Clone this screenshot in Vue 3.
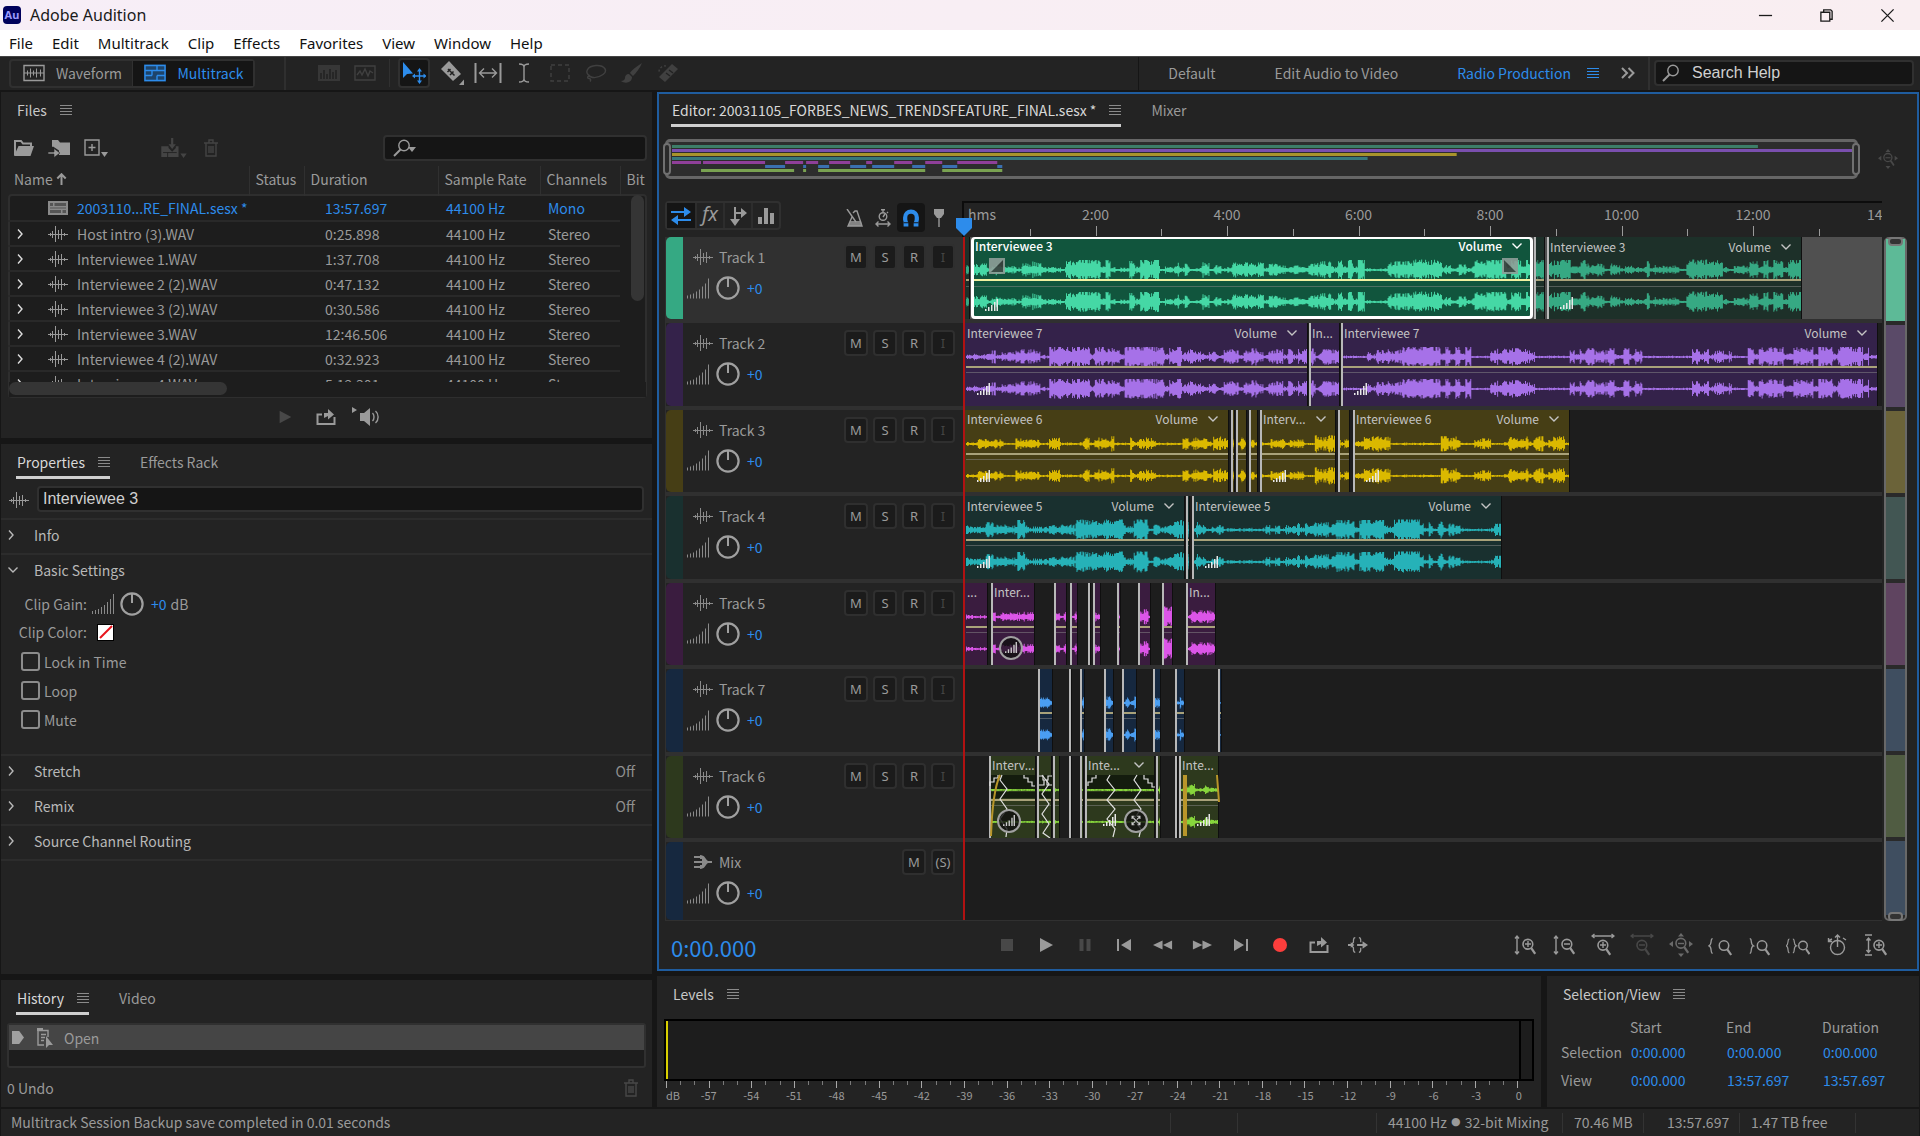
<script setup>
import { ref } from 'vue'

const menus = ['File', 'Edit', 'Multitrack', 'Clip', 'Effects', 'Favorites', 'View', 'Window', 'Help']

const files = [
  { name: '2003110...RE_FINAL.sesx *', duration: '13:57.697', channels: 'Mono', session: true },
  { name: 'Host intro (3).WAV', duration: '0:25.898', channels: 'Stereo' },
  { name: 'Interviewee 1.WAV', duration: '1:37.708', channels: 'Stereo' },
  { name: 'Interviewee 2 (2).WAV', duration: '0:47.132', channels: 'Stereo' },
  { name: 'Interviewee 3 (2).WAV', duration: '0:30.586', channels: 'Stereo' },
  { name: 'Interviewee 3.WAV', duration: '12:46.506', channels: 'Stereo' },
  { name: 'Interviewee 4 (2).WAV', duration: '0:32.923', channels: 'Stereo' },
  { name: 'Interviewee 4.WAV', duration: '5:12.301', channels: 'Stereo' }
]

// Timeline units: the visible session is LANE units wide.
const LANE = 918
const pct = (v) => (v / LANE) * 100 + '%'

// env: [end of segment, loudness 0-9]; clips: [start, end, options]
const tracks = [
  {
    name: 'Track 1', key: 't1', selected: true,
    env: [[36, 6], [52, 4], [77, 8], [99, 4], [125, 9], [145, 9], [164, 3], [194, 9], [213, 4], [225, 8], [237, 3], [257, 7], [268, 3], [295, 8], [316, 7], [345, 4], [373, 8], [402, 9], [425, 2], [451, 8], [480, 9.5], [513, 5], [525, 9], [569, 9], [620, 9], [667, 6], [682, 3], [691, 8], [722, 4], [759, 9.5], [786, 4], [838, 9]],
    clips: [
      [0, 6, {}],
      [7, 569, { label: 'Interviewee 3', vol: true, chev: true, on: true, bars: true }],
      [570, 581, {}],
      [583, 838, { label: 'Interviewee 3', vol: true, chev: true, bars: true }]
    ]
  },
  {
    name: 'Track 2', key: 't2',
    env: [[25, 3], [50, 6], [75, 7], [84, 2], [217, 9], [229, 7], [258, 6], [300, 8], [343, 8], [376, 8], [401, 1], [437, 7], [506, 9], [525, 1], [570, 8], [605, 1], [655, 8], [659, 3], [678, 8], [728, 1], [768, 7], [784, 1], [906, 9], [911, 2], [918, 6]],
    clips: [
      [0, 344, { label: 'Interviewee 7', vol: true, chev: true, bars: true }],
      [345, 376, { label: 'In...' }],
      [377, 914, { label: 'Interviewee 7', vol: true, chev: true, bars: true }]
    ]
  },
  {
    name: 'Track 3', key: 't3',
    env: [[12, 2], [38, 5], [50, 1], [75, 5], [84, 1], [96, 7], [118, 2], [150, 7], [166, 1], [192, 6], [219, 1], [265, 7], [290, 6], [300, 2], [340, 5], [351, 1], [372, 8], [386, 6], [398, 3], [425, 7], [476, 1], [496, 7], [510, 1], [527, 6], [540, 1], [602, 7], [606, 1]],
    clips: [
      [0, 265, { label: 'Interviewee 6', vol: true, chev: true, bars: true }],
      [267, 271, {}], [272, 283, {}], [285, 294, {}],
      [296, 372, { label: 'Interv...', chev: true, bars: true }],
      [374, 386, {}],
      [389, 606, { label: 'Interviewee 6', vol: true, chev: true, bars: true }]
    ]
  },
  {
    name: 'Track 4', key: 't4',
    env: [[13, 4], [42, 7], [52, 4], [60, 9], [85, 4], [111, 6], [160, 9.5], [170, 4], [184, 9.5], [210, 5], [219, 9], [234, 8], [258, 5], [300, 2], [332, 5], [342, 8], [370, 7], [420, 9], [430, 5], [456, 9.5], [468, 7], [474, 4], [482, 8], [497, 6], [531, 2], [538, 6]],
    clips: [
      [0, 221, { label: 'Interviewee 5', vol: true, chev: true, bars: true }],
      [222, 226, {}],
      [228, 538, { label: 'Interviewee 5', vol: true, chev: true, bars: true }]
    ]
  },
  {
    name: 'Track 5', key: 't5',
    env: [[27, 2], [60, 4], [71, 6], [120, 5], [170, 4], [190, 7], [210, 9.5], [258, 8]],
    clips: [
      [0, 24, { label: '...' }], [27, 71, { label: 'Inter...', round: 'bars' }], [90, 103, {}], [106, 114, {}],
      [124, 127, {}], [129, 137, {}], [153, 157, {}], [174, 187, {}], [198, 209, {}], [222, 252, { label: 'In...' }]
    ]
  },
  {
    name: 'Track 7', key: 't7',
    env: [[104, 5], [110, 0], [250, 6], [260, 0]],
    clips: [
      [74, 89, {}], [105, 108, {}], [116, 121, {}], [140, 150, {}], [158, 173, {}], [189, 197, {}], [211, 221, {}], [254, 258, {}]
    ]
  },
  {
    name: 'Track 6', key: 't6', fades: true,
    env: [[89, 1], [96, 2], [191, 1], [197, 5], [218, 4], [255, 6]],
    clips: [
      [25, 72, { label: 'Interv...', round: 'bars' }], [73, 88, {}], [89, 96, {}], [105, 108, {}], [116, 120, {}],
      [121, 191, { label: 'Inte...', chev: true, bars: true, round: 'mix' }], [192, 197, {}], [211, 214, {}],
      [215, 255, { label: 'Inte...', bars: true }]
    ]
  }
]

const rand = (n) => {
  const s = Math.sin(n * 127.1 + 11.7) * 43758.5453
  return s - Math.floor(s)
}

function level(track, x) {
  const seg = track.env.find((s) => x < s[0])
  const loud = seg ? seg[1] : 0
  const seed = track.env.length
  if (loud <= 2) return 0.7 + loud * rand(x + seed) * rand(x * 7 + seed)
  const pause = rand(Math.floor(x / 5) + seed * 3) < 0.18 && loud < 9.5 ? 0.35 : 1
  const syllable = 0.6 + 0.5 * rand(Math.floor(x / 7) + seed)
  const spike = 0.4 + 0.75 * rand(x * 3 + seed)
  return Math.max(1, loud * 1.1 * pause * Math.min(1, syllable * spike + (loud > 8 ? 0.2 : 0)))
}

function wave(track, start, end, mid) {
  let top = `M0 ${mid}`
  let bottom = ''
  for (let x = 0; x < end - start; x += 1) {
    const a = level(track, start + x)
    const b = a * (0.8 + 0.2 * rand(x + start))
    top += `V${(mid - a).toFixed(1)}H${x + 1}`
    bottom = `V${(mid + b).toFixed(1)}H${x}` + bottom
  }
  return top + bottom + 'Z'
}

const ruler = []
for (let m = 1; m <= 14; m += 1) {
  ruler.push({ at: (m * 60 * LANE) / 837.7, label: m % 2 ? '' : m + ':00' })
}

const overview = [
  ['#3d7d68', 0, [[0, 1085]]],
  ['#7a4fae', 4, [[0, 1181]]],
  ['#a8932c', 8, [[0, 784]]],
  ['#36777b', 12, [[0, 695]]],
  ['#8f3f99', 16, [[0, 29], [31, 93], [113, 131], [134, 146], [157, 178], [194, 200], [222, 240], [253, 270], [285, 325]]],
  ['#3a70b0', 20, [[93, 113], [131, 134], [146, 157], [178, 194], [200, 222], [240, 253], [270, 285], [325, 330]]],
  ['#79a251', 24, [[29, 122], [131, 134], [146, 253], [270, 330]]]
]

const transport = [
  ['stop', 'Stop', true], ['play', 'Play'], ['pause', 'Pause', true], ['prev', 'Move to previous'], ['rewind', 'Rewind'],
  ['forward', 'Fast forward'], ['next', 'Move to next'], ['record', 'Record'], ['loop', 'Loop playback'], ['skip', 'Skip selection']
]
const zooms = [
  ['z-in-v', 'Zoom in amplitude'], ['z-out-v', 'Zoom out amplitude'], ['z-in-h', 'Zoom in time'], ['z-out-h', 'Zoom out time', true],
  ['z-full', 'Zoom out full', false, true], ['z-left', 'Zoom in at in point'], ['z-right', 'Zoom in at out point'], ['z-sel', 'Zoom to selection'],
  ['timer', 'Zoom to time'], ['z-track', 'Zoom selected track']
]

const dbTicks = Array.from({ length: 61 }, (_, i) => i)
const dbLabels = Array.from({ length: 21 }, (_, i) => (i ? String(i * 3 - 60) : 'dB'))

const clipName = ref('Interviewee 3')
const flags = ref([
  { label: 'Lock in Time', id: 'lock', on: false },
  { label: 'Loop', id: 'loop', on: false },
  { label: 'Mute', id: 'mute', on: false }
])
</script>

<template>
  <div class="app">
    <svg class="sprite" aria-hidden="true">
      <symbol id="i-menu" viewBox="0 0 12 12"><path d="M0 1.5h12M0 4.5h12M0 7.5h12M0 10.5h12" class="ln" /></symbol>
      <symbol id="i-right" viewBox="0 0 8 12"><path d="M2 1.5l4 4.5-4 4.5" class="ln2" /></symbol>
      <symbol id="i-down" viewBox="0 0 12 8"><path d="M1.500 1.500l4.500 4.500 4.500-4.500" class="ln2" /></symbol>
      <symbol id="i-wave" viewBox="0 0 20 16"><path d="M0 8.500h20M2.500 7v3M4.500 5v7M7.500 0v16M10.500 4v9M13.500 3v11M16.500 7v3" class="ln" /></symbol>
      <symbol id="i-wavebox" viewBox="0 0 22 17"><path d="M1 1h20v15H1z" class="ln2" /><path d="M1 8.500h20M4.500 6v5M7.500 4v9M10.500 6v5M13.500 4v9M17.500 5v7" class="ln" /></symbol>
      <symbol id="i-multi" viewBox="0 0 22 17"><path d="M0 0h22v17H0z" fill="currentColor" opacity=".4" /><path d="M1 1h20v15H1zM1 6h20M13 11h8M8 6v5M8 11H1M13 1v5M13 11v5" class="ln2" /></symbol>
      <symbol id="i-session" viewBox="0 0 20 14"><path d="M0 0h20v14H0z" fill="currentColor" /><path d="M2 2h3v3H2zM6.500 2h11.500v3H6.500zM2 6.500h16v1H2zM2 9h11v3H2zM14.500 9h3.500v3h-3.500z" fill="#555" /></symbol>
      <symbol id="i-spec" viewBox="0 0 22 16"><path d="M0 0h22v16H0z" fill="currentColor" opacity=".7" /><path d="M3 14V8M6 14V5M9 14V9M12 14V4M15 14V7M18 14V5" stroke="#222" stroke-width="1.500" /></symbol>
      <symbol id="i-pitch" viewBox="0 0 22 16"><path d="M1 1h20v14H1zM3 10l3-4 2 4 3-6 3 7 2-5 3 2" class="ln2" /></symbol>
      <symbol id="i-move" viewBox="0 0 24 24"><path d="M1 1v16l4-4 6-.5z" fill="currentColor" /><path d="M12 15h11M17.500 9.500v11" class="ln2" /><path d="M17.500 7l-2.500 3.500h5zM17.500 23l-2.500-3.500h5zM10 15l3-2.500v5zM24.500 15l-3-2.500v5z" fill="currentColor" /></symbol>
      <symbol id="i-razor" viewBox="0 0 24 24"><path d="M9 0l12 13-8 7L1 8z" fill="currentColor" /><path d="M8 8l6.500 6.500M7.500 11l3-3M10 14l3.500-3.500" stroke="#222" stroke-width="1.500" /><path d="M24 18.500V24h-5z" fill="currentColor" /></symbol>
      <symbol id="i-slip" viewBox="0 0 28 20"><path d="M1.500 0v20M26.500 0v20" class="ln3" /><path d="M6 10h16M10 5.500L5.500 10l4.500 4.500M18 5.500l4.500 4.500-4.500 4.500" class="ln2" /></symbol>
      <symbol id="i-ibeam" viewBox="0 0 12 20"><path d="M1 1c3 0 5 1 5 3v12c0 2-2 3-5 3M11 1C8 1 6 2 6 4M6 16c0 2 2 3 5 3" class="ln2" /></symbol>
      <symbol id="i-marquee" viewBox="0 0 20 18"><path d="M1 1h18v16H1z" class="ln2" stroke-dasharray="4 3" /></symbol>
      <symbol id="i-lasso" viewBox="0 0 22 18"><path d="M5 12C-1 9 2 2 11 1.500S23 7 18 10.500 8 14 5 12.500c-3-1-3 2-1 2s2 2 1 3" class="ln2" /></symbol>
      <symbol id="i-brush" viewBox="0 0 22 20"><path d="M21 0c-5 3-10 7-12 10l3 3c3-3 7-8 9-13zM8 11c-3 0-4 2-4 4s-2 3-4 3c4 3 11 2 11-4z" fill="currentColor" /></symbol>
      <symbol id="i-heal" viewBox="0 0 22 20"><path d="M15 1l6 5L8 19l-6-5z" fill="currentColor" /><path d="M9 3a6 6 0 0 0-7 6" class="ln2" stroke-dasharray="2 2" /><path d="M9 10l4 3M12 7l4 3" stroke="#222" stroke-width="1.500" /></symbol>
      <symbol id="i-more" viewBox="0 0 14 12"><path d="M1 1l5 5-5 5M7.500 1l5 5-5 5" class="ln3" /></symbol>
      <symbol id="i-search" viewBox="0 0 18 18"><circle cx="11" cy="6.500" r="5.200" class="ln2" /><path d="M7.500 10.500L1 17" class="ln3" /></symbol>
      <symbol id="i-open" viewBox="0 0 20 16"><path d="M1 15V1h6l2 2.500h8V6" class="ln3" /><path d="M4.500 6H20l-3.500 10H0z" fill="currentColor" /></symbol>
      <symbol id="i-import" viewBox="0 0 22 18"><path d="M4 8V1h6l2 2.500h10V16H11v-4.500L5 7.500z" fill="currentColor" /><path d="M0 13h6V9.500l6 4.500-6 4.500V15H0z" fill="currentColor" stroke="#222" stroke-width=".6" /></symbol>
      <symbol id="i-new" viewBox="0 0 24 18"><path d="M1 1h14v15H1zM8 5v7M4.500 8.500h7" class="ln2" /><path d="M17 13h7l-3.500 5z" fill="currentColor" /></symbol>
      <symbol id="i-insert" viewBox="0 0 28 22"><path d="M0 9h8v2l4 4 4-4V9h3v12H0z" fill="currentColor" /><path d="M2 16h15M7 16v5" stroke="#222" /><path d="M10.800 0h2.400v7H16l-4 5-4-5h2.800zM21 17h7l-3.500 5z" fill="currentColor" /></symbol>
      <symbol id="i-trash" viewBox="0 0 14 18"><path d="M0 4h14M5 3.500V1h4v2.500M2 4v13h10V4M5 7v7M7 7v7M9 7v7" class="ln2" /></symbol>
      <symbol id="i-up" viewBox="0 0 10 12"><path d="M5 12V1.500M.800 5.500L5 1.200l4.200 4.300" class="ln3" /></symbol>
      <symbol id="i-play" viewBox="0 0 20 20"><path d="M4 3l13 7-13 7z" fill="currentColor" /></symbol>
      <symbol id="i-stop" viewBox="0 0 20 20"><path d="M4 4h12v12H4z" fill="currentColor" /></symbol>
      <symbol id="i-pause" viewBox="0 0 20 20"><path d="M4.500 4h4v12h-4zM11.500 4h4v12h-4z" fill="currentColor" /></symbol>
      <symbol id="i-prev" viewBox="0 0 20 20"><path d="M3 4h2v12H3zM17 4v12l-10-6z" fill="currentColor" /></symbol>
      <symbol id="i-next" viewBox="0 0 20 20"><path d="M15 4h2v12h-2zM3 4v12l10-6z" fill="currentColor" /></symbol>
      <symbol id="i-rewind" viewBox="0 0 22 20"><path d="M10.500 5v10L0 10zM21 5v10l-10-5z" fill="currentColor" /></symbol>
      <symbol id="i-forward" viewBox="0 0 22 20"><path d="M1 5v10l10.500-5zM11.500 5v10L22 10z" fill="currentColor" /></symbol>
      <symbol id="i-record" viewBox="0 0 20 20"><circle cx="10" cy="10" r="7" fill="#fc3e3c" /></symbol>
      <symbol id="i-loop" viewBox="0 0 20 18"><path d="M6 6.500H1.500V16h17V9" class="ln3" /><path d="M8 10V5h4V1l6 5.500-6 5V8z" fill="currentColor" /></symbol>
      <symbol id="i-skip" viewBox="0 0 22 18"><path d="M8 1c-2 0-2 1-2 3v2L3.500 9 6 12v2c0 2 0 3 2 3M12 1c2 0 2 1 2 3v2M14 12v2c0 2 0 3-2 3" class="ln2" /><path d="M0 8h3V6l4 3-4 3v-2H0zM10 8h6V5l6 4-6 4v-3h-6z" fill="currentColor" /></symbol>
      <symbol id="i-speaker" viewBox="0 0 28 20"><path d="M0 0l5 3-5 3zM8 6h4l6-5v18l-6-5H8z" fill="currentColor" /><path d="M20.500 6c2 2 2 6 0 8M23.500 4c3.500 3 3.500 9 0 12" class="ln2" /></symbol>
      <symbol id="i-volbars" viewBox="0 0 22 20"><path d="M.5 20v-3M3.500 20v-4M6.500 20v-5M9.500 20v-7M12.500 20v-9M15.500 20V8M18.500 20V5M21.500 20V0" class="ln" /></symbol>
      <symbol id="i-knob" viewBox="0 0 24 24"><circle cx="12" cy="12" r="10.600" fill="none" stroke="currentColor" stroke-width="2.200" /><path d="M12 2v9" class="ln3" /></symbol>
      <symbol id="i-arrows" viewBox="0 0 20 18"><path d="M0 5h14M20 13H5" class="ln3" /><path d="M13 0l7 5-7 5zM7 8l-7 5 7 5z" fill="currentColor" /></symbol>
      <symbol id="i-send" viewBox="0 0 18 20"><path d="M6 1v14M6 7h8" class="ln3" /><path d="M1 13h10l-5 7zM12 2l6 5-6 5z" fill="currentColor" /></symbol>
      <symbol id="i-eq" viewBox="0 0 16 16"><path d="M0 9h4v7H0zM6 0h4v16H6zM12 5h4v11h-4z" fill="currentColor" /></symbol>
      <symbol id="i-metro" viewBox="0 0 16 18"><path d="M6 4l2-2h2l5 15H1l4-9M0 0l9 13" class="ln2" /><path d="M3 12h11l1 5H1z" fill="currentColor" opacity=".8" /></symbol>
      <symbol id="i-watch" viewBox="0 0 18 18"><circle cx="9" cy="7.500" r="3.800" class="ln2" /><path d="M9 3V.5M7 .8h4M9 8l2-3M13 3l1 1M2 15h14M4.500 12.500L2 15l2.500 2.500M13.500 12.500L16 15l-2.500 2.500" class="ln2" /></symbol>
      <symbol id="i-magnet" viewBox="0 0 16 17"><path d="M5.500 16.500H1V12a9 9 0 0 1-.5-4 7.500 7.500 0 0 1 15 0 9 9 0 0 1-.5 4v4.500h-4.500V13c1-2 1-3 1-5a3.500 3.500 0 0 0-7 0c0 2 0 3 1 5z" fill="currentColor" /><path d="M1 13h5M10 13h5" stroke="#161616" /></symbol>
      <symbol id="i-pin" viewBox="0 0 10 18"><path d="M0 0h10v5L7 9H3L0 5z" fill="currentColor" /><path d="M5 8v10" class="ln2" /></symbol>
      <symbol id="i-mix" viewBox="0 0 20 16"><path d="M1 3h6M1 13h6M1 8h18" class="ln3" /><path d="M7 1c5 0 5 4 8 6v2c-3 2-3 6-8 6v-4h2V5H7z" fill="currentColor" /></symbol>
      <symbol id="i-minibars" viewBox="0 0 13 12"><path d="M0 12V10h1.500v2zM3 12V8h1.500v4zM6 12V6h1.500v6zM9 12V3h1.500v9zM11.500 12V0H13v12z" fill="currentColor" /></symbol>
      <symbol id="i-shuffle" viewBox="0 0 14 14"><path d="M2 2l10 10M12 2L8 6M2 12l4-4M8.500 1.500H12V5M2 5V1.500h3M12 9v3.500H9M2 9v3.500h3" class="ln2" /></symbol>
      <symbol id="i-lens" viewBox="0 0 12 15"><circle cx="5" cy="5.500" r="4.300" class="ln2" /><path d="M8 9l3.500 5" class="ln3" /></symbol>
      <symbol id="i-z-in-v" viewBox="0 0 24 24"><use href="#i-lens" x="9" y="5" width="14" height="17" /><path d="M12 11h6M15 8v6M4 3v18M2 5.500L4 3l2 2.500M2 18.500L4 21l2-2.500" class="ln2" /></symbol>
      <symbol id="i-z-out-v" viewBox="0 0 24 24"><use href="#i-lens" x="9" y="5" width="14" height="17" /><path d="M12 11h6M4 3v18M2 5.500L4 3l2 2.500M2 18.500L4 21l2-2.500" class="ln2" /></symbol>
      <symbol id="i-z-in-h" viewBox="0 0 24 24"><use href="#i-lens" x="6" y="6" width="14" height="17" /><path d="M9 12h6M12 9v6M1 3h22M3.500 1L1 3l2.500 2M20.500 1L23 3l-2.500 2" class="ln2" /></symbol>
      <symbol id="i-z-out-h" viewBox="0 0 24 24"><use href="#i-lens" x="6" y="6" width="14" height="17" /><path d="M9 12h6M1 3h22M3.500 1L1 3l2.500 2M20.500 1L23 3l-2.500 2" class="ln2" /></symbol>
      <symbol id="i-z-full" viewBox="0 0 24 24"><use href="#i-lens" x="6" y="4" width="14" height="17" /><path d="M9 10.500h6" class="ln2" /><path d="M12 0l3 3.500H9zM12 24l3-3.500H9zM0 11l4-3v6zM24 11l-4-3v6z" fill="currentColor" /></symbol>
      <symbol id="i-z-left" viewBox="0 0 26 24"><use href="#i-lens" x="11" y="6" width="15" height="18" /><path d="M5 5c-3 0 0 6-4 8 4 1 1 8 4 8" class="ln2" /></symbol>
      <symbol id="i-z-right" viewBox="0 0 26 24"><use href="#i-lens" x="10" y="6" width="15" height="18" /><path d="M3 5c3 0 0 6 4 8-4 1-1 8-4 8" class="ln2" /></symbol>
      <symbol id="i-z-sel" viewBox="0 0 28 24"><use href="#i-lens" x="14" y="6" width="14" height="18" /><path d="M4 5c-3 0 0 6-4 8 4 1 1 8 4 8M8 5c3 0 0 6 4 8-4 1-1 8-4 8" class="ln2" /></symbol>
      <symbol id="i-timer" viewBox="0 0 24 24"><circle cx="12.500" cy="14.500" r="7" class="ln2" /><path d="M12.500 14V2M10 4.500L12.500 2 15 4.500M3 8l4-2M3.500 5v3.500H7M18 5l3 2" class="ln2" /></symbol>
      <symbol id="i-z-track" viewBox="0 0 24 24"><use href="#i-lens" x="9" y="6" width="14" height="17" /><path d="M12 12h6M15 9v6M1 2h7M1 22h7M4.500 5v14M2.500 7.500l2-2.500 2 2.500M2.500 17l2 2.500 2-2.500" class="ln2" /></symbol>
      <symbol id="i-doc" viewBox="0 0 18 20"><path d="M1 2.500h10V9M1 2.500V17h6M4 6.500h5M4 9.500h4M4 12.500h3" class="ln2" /><path d="M0 0h6v3H0zM9 8l7 9h-4l-3 3z" fill="currentColor" /></symbol>
    </svg>

    <header class="titlebar">
      <span class="logo">Au</span>
      <h1>Adobe Audition</h1>
      <div class="winbtns">
        <button aria-label="Minimize"><svg viewBox="0 0 16 16"><path d="M1 8h14" class="ln2" /></svg></button>
        <button aria-label="Restore"><svg viewBox="0 0 16 16"><path d="M2 4.500h9.500V14H2zM5 4V2h7.500L14 3.500V12h-2" class="ln2" /></svg></button>
        <button aria-label="Close"><svg viewBox="0 0 16 16"><path d="M1.500 1.500l13 13M14.500 1.500l-13 13" class="ln2" /></svg></button>
      </div>
    </header>
    <nav class="menubar">
      <button v-for="m in menus" :key="m">{{ m }}</button>
    </nav>

    <div class="toolbar">
      <div class="modes">
        <button class="mode"><svg class="w22"><use href="#i-wavebox" /></svg>Waveform</button>
        <button class="mode active"><svg class="w22"><use href="#i-multi" /></svg>Multitrack</button>
      </div>
      <div class="tools">
        <button class="tool dim" aria-label="Spectral frequency"><svg class="w22"><use href="#i-spec" /></svg></button>
        <button class="tool dim" aria-label="Spectral pitch"><svg class="w22"><use href="#i-pitch" /></svg></button>
        <i class="rule"></i>
        <button class="tool active" aria-label="Move tool"><svg class="w24"><use href="#i-move" /></svg></button>
        <button class="tool" aria-label="Razor tool"><svg class="w24"><use href="#i-razor" /></svg></button>
        <button class="tool" aria-label="Slip tool"><svg class="w28"><use href="#i-slip" /></svg></button>
        <button class="tool" aria-label="Time selection tool"><svg class="w20"><use href="#i-ibeam" /></svg></button>
        <button class="tool dim" aria-label="Marquee tool"><svg class="w20"><use href="#i-marquee" /></svg></button>
        <button class="tool dim" aria-label="Lasso tool"><svg class="w22"><use href="#i-lasso" /></svg></button>
        <button class="tool dim" aria-label="Paintbrush tool"><svg class="w22"><use href="#i-brush" /></svg></button>
        <button class="tool dim" aria-label="Healing brush tool"><svg class="w22"><use href="#i-heal" /></svg></button>
      </div>
      <div class="spaces">
        <button>Default</button>
        <button>Edit Audio to Video</button>
        <button class="active">Radio Production<svg class="burger"><use href="#i-menu" /></svg></button>
        <button class="more" aria-label="More workspaces"><svg><use href="#i-more" /></svg></button>
      </div>
      <div class="help">
        <label class="field"><svg class="w18"><use href="#i-search" /></svg><input type="text" value="Search Help" aria-label="Search Help" /></label>
      </div>
    </div>

    <main class="workspace">
      <div class="col">
        <section class="panel files">
          <div class="tabs"><button class="tab lit">Files<svg class="burger"><use href="#i-menu" /></svg></button></div>
          <div class="filetools">
            <button aria-label="Open file"><svg class="w20"><use href="#i-open" /></svg></button>
            <button aria-label="Import file"><svg class="w22"><use href="#i-import" /></svg></button>
            <button aria-label="New"><svg class="w24"><use href="#i-new" /></svg></button>
            <button class="dim" aria-label="Insert into multitrack"><svg class="w28"><use href="#i-insert" /></svg></button>
            <button class="dim" aria-label="Delete"><svg class="w14"><use href="#i-trash" /></svg></button>
            <label class="field filter"><svg class="w18"><use href="#i-search" /></svg><b class="caret"></b><input type="text" aria-label="Filter files" /></label>
          </div>
          <div class="filetable">
            <table>
              <colgroup><col class="c1" /><col class="c2" /><col class="c3" /><col class="c4" /><col class="c5" /><col /></colgroup>
              <thead>
                <tr><th>Name<svg class="sort"><use href="#i-up" /></svg></th><th>Status</th><th>Duration</th><th>Sample Rate</th><th>Channels</th><th>Bit</th></tr>
              </thead>
              <tbody>
                <tr v-for="f in files" :key="f.name" :class="{ blue: f.session }">
                  <td>
                    <div class="fname">
                      <span class="exp"><svg v-if="!f.session"><use href="#i-right" /></svg></span>
                      <svg class="w20 kind"><use :href="f.session ? '#i-session' : '#i-wave'" /></svg>{{ f.name }}
                    </div>
                  </td>
                  <td></td><td class="dur">{{ f.duration }}</td><td>44100 Hz</td><td>{{ f.channels }}</td><td></td>
                </tr>
              </tbody>
            </table>
            <i class="vthumb"></i>
            <div class="hbar"><i></i></div>
          </div>
          <div class="preview">
            <button class="dim" aria-label="Play"><svg class="w18"><use href="#i-play" /></svg></button>
            <button aria-label="Loop"><svg class="w20"><use href="#i-loop" /></svg></button>
            <button aria-label="Auto-play"><svg class="w28"><use href="#i-speaker" /></svg></button>
          </div>
        </section>

        <section class="panel props">
          <div class="tabs">
            <button class="tab on">Properties<svg class="burger"><use href="#i-menu" /></svg></button>
            <button class="tab">Effects Rack</button>
          </div>
          <div class="cliprow"><svg class="w20"><use href="#i-wave" /></svg><input v-model="clipName" class="box" type="text" aria-label="Clip name" /></div>
          <button class="sect"><svg class="r"><use href="#i-right" /></svg>Info</button>
          <button class="sect open"><svg class="d"><use href="#i-down" /></svg>Basic Settings</button>
          <div class="basic">
            <div class="gain"><span class="lab">Clip Gain:</span><svg class="vb"><use href="#i-volbars" /></svg><svg class="kn"><use href="#i-knob" /></svg><a href="#gain">+0</a><span class="unit">dB</span></div>
            <div class="gain"><span class="lab">Clip Color:</span><button class="swatch" aria-label="Clip color"><svg viewBox="0 0 14 14"><path d="M1 13L13 1" stroke="#e8141c" stroke-width="2" /></svg></button></div>
            <label v-for="f in flags" :key="f.id" class="check"><input v-model="f.on" type="checkbox" />{{ f.label }}</label>
          </div>
          <button class="sect"><svg class="r"><use href="#i-right" /></svg>Stretch<em>Off</em></button>
          <button class="sect"><svg class="r"><use href="#i-right" /></svg>Remix<em>Off</em></button>
          <button class="sect"><svg class="r"><use href="#i-right" /></svg>Source Channel Routing</button>
        </section>

        <section class="panel history">
          <div class="tabs">
            <button class="tab on">History<svg class="burger"><use href="#i-menu" /></svg></button>
            <button class="tab">Video</button>
          </div>
          <div class="histlist"><div class="histrow"><i class="mark"></i><svg class="w20"><use href="#i-doc" /></svg>Open</div></div>
          <div class="undo">0 Undo<button class="dim" aria-label="Delete history"><svg class="w14"><use href="#i-trash" /></svg></button></div>
        </section>
      </div>

      <div class="col right">
        <section class="panel editor">
          <div class="tabs">
            <button class="tab on">Editor: 20031105_FORBES_NEWS_TRENDSFEATURE_FINAL.sesx *<svg class="burger"><use href="#i-menu" /></svg></button>
            <button class="tab">Mixer</button>
          </div>
          <div class="overview">
            <div class="navwrap">
              <div class="nav">
                <svg viewBox="0 0 1181 27" preserveAspectRatio="none">
                  <g v-for="row in overview" :key="row[1]" :fill="row[0]">
                    <rect v-for="s in row[2]" :key="s[0]" :x="s[0]" :y="row[1]" :width="s[1] - s[0]" height="3" />
                  </g>
                </svg>
              </div>
              <i class="grip l"></i><i class="grip r"></i>
            </div>
            <button class="dim" aria-label="Zoom out full"><svg class="w20"><use href="#i-z-full" /></svg></button>
          </div>

          <div class="session">
            <div class="headtools">
              <div class="views">
                <button class="active" aria-label="Inputs/Outputs"><svg class="w20"><use href="#i-arrows" /></svg></button>
                <button class="fx">fx</button>
                <button aria-label="Sends"><svg class="w20"><use href="#i-send" /></svg></button>
                <button aria-label="EQ"><svg class="w16"><use href="#i-eq" /></svg></button>
              </div>
              <div class="snap">
                <button aria-label="Metronome"><svg class="w18"><use href="#i-metro" /></svg></button>
                <button aria-label="Stretch"><svg class="w20"><use href="#i-watch" /></svg></button>
                <button class="active" aria-label="Snapping"><svg class="w18"><use href="#i-magnet" /></svg></button>
                <button aria-label="Marker"><svg class="w18"><use href="#i-pin" /></svg></button>
              </div>
            </div>
            <div class="ruler">
              <span class="hms">hms</span>
              <div class="scale">
                <span v-for="t in ruler" :key="t.at" class="tick" :class="{ minor: !t.label }" :style="{ left: pct(t.at) }">{{ t.label }}</span>
              </div>
              <svg class="playhead" viewBox="0 0 16 18"><path d="M0 0h16v10l-8 8-8-8z" fill="#2d8ceb" /></svg>
            </div>

            <div class="heads">
              <div v-for="t in tracks" :key="t.key" class="head" :class="[t.key, { sel: t.selected }]">
                <i class="strip"></i>
                <div class="hbody">
                  <div class="hrow">
                    <svg class="w20"><use href="#i-wave" /></svg><span>{{ t.name }}</span>
                    <div class="msr"><button>M</button><button>S</button><button>R</button><button disabled>I</button></div>
                  </div>
                  <div class="hrow two"><svg class="vb"><use href="#i-volbars" /></svg><svg class="kn"><use href="#i-knob" /></svg><a href="#volume">+0</a></div>
                </div>
              </div>
              <div class="head mix">
                <i class="strip"></i>
                <div class="hbody">
                  <div class="hrow"><svg class="w20"><use href="#i-mix" /></svg><span>Mix</span><div class="msr"><button>M</button><button>(S)</button></div></div>
                  <div class="hrow two"><svg class="vb"><use href="#i-volbars" /></svg><svg class="kn"><use href="#i-knob" /></svg><a href="#volume">+0</a></div>
                </div>
              </div>
            </div>

            <div class="lanes">
              <div v-for="t in tracks" :key="t.key" class="lane" :class="[t.key, { sel: t.selected }]">
                <div v-for="c in t.clips" :key="c[0]" class="clip" :class="{ on: c[2].on, first: c[0] === 0 }" :style="{ left: pct(c[0]), width: pct(c[1] - c[0]) }">
                  <svg class="wv" :viewBox="`0 0 ${c[1] - c[0]} 82`" preserveAspectRatio="none">
                    <path :d="wave(t, c[0], c[1], 34)" />
                    <path :d="wave(t, c[0], c[1], 66)" />
                  </svg>
                  <i class="vline"></i><i class="chline"></i>
                  <div v-if="c[2].label" class="ctitle">
                    <span>{{ c[2].label }}</span><span v-if="c[2].vol" class="vol">Volume</span>
                    <svg v-if="c[2].chev"><use href="#i-down" /></svg>
                  </div>
                  <svg v-if="c[2].bars" class="bars"><use href="#i-minibars" /></svg>
                  <template v-if="c[2].on">
                    <svg class="fade in" viewBox="0 0 16 16"><path d="M0 0h16v16H0z" fill="#8f9f98" /><path d="M14 2v12H2z" fill="#3a3f3c" /></svg>
                    <svg class="fade out" viewBox="0 0 16 16"><path d="M0 0h16v16H0z" fill="#8f9f98" /><path d="M2 2v12h12z" fill="#3a3f3c" /></svg>
                  </template>
                </div>
                <svg v-if="t.fades" class="fades" viewBox="0 0 918 82" preserveAspectRatio="none">
                  <path d="M27 19h44v14H27zM75 19h13v14H75zM123 19h67v14h-67zM27 36h44v6H27zM75 36h13v6H75zM123 36h67v6h-67z" fill="#141c0e" />
                  <path d="M38 19l-2 5 7 9-7 10 7 10-7 10 7 10-1 8M78 19l7 9-7 10 7 10-7 10 7 10-6 9 7 5M146 19l-3 5 8 10-8 10 8 9-8 10 8 10-2 8M173 19l-3 5 7 10-7 10 7 9-7 10 7 10-2 8" class="zig" />
                  <path d="M26 30v-4h4v-4h4v-3M60 19v3h4v4h4v4h3M75 20h4v4h4v5h5M88 20h-4v4h-4v5h-5M124 30v-4h4v-4h4v-3M180 19v4h4v4h4v4h3" class="zig" />
                  <path d="M27 80c1-30 4-50 9-61M253 19l2 27" fill="none" stroke="#b8962a" stroke-width="2" />
                  <path d="M219 19h4v61h-4z" fill="#b8962a" />
                </svg>
                <template v-for="c in t.clips" :key="'r' + c[0]">
                  <span v-if="c[2].round" class="round" :style="{ left: pct(c[2].round === 'mix' ? c[1] - 19 : c[0] + 20) }"><svg><use :href="c[2].round === 'mix' ? '#i-shuffle' : '#i-minibars'" /></svg></span>
                </template>
              </div>
              <div class="lane mixlane"></div>
              <i class="needle"></i>
            </div>

            <div class="vnav">
              <i v-for="t in tracks" :key="t.key" :class="t.key"></i><i class="mx"></i>
              <b class="cap top"></b><b class="cap bot"></b>
            </div>
          </div>

          <footer class="transport">
            <a href="#time" class="time">0:00.000</a>
            <div class="tbtns"><button v-for="b in transport" :key="b[0]" :class="{ dim: b[2] }" :aria-label="b[1]"><svg class="w20"><use :href="'#i-' + b[0]" /></svg></button></div>
            <div class="tbtns"><button v-for="b in zooms" :key="b[0]" :class="{ dim: b[2], half: b[3] }" :aria-label="b[1]"><svg class="w24"><use :href="'#i-' + b[0]" /></svg></button></div>
          </footer>
        </section>

        <div class="bottom">
          <section class="panel levels">
            <div class="tabs"><button class="tab lit">Levels<svg class="burger"><use href="#i-menu" /></svg></button></div>
            <div class="meter"><i class="peak"></i><i class="clipzone"></i></div>
            <div class="dbscale">
              <div class="dbticks"><i v-for="n in dbTicks" :key="n" :class="{ big: n % 3 === 0 }"></i></div>
              <div class="dblabels"><span v-for="l in dbLabels" :key="l">{{ l }}</span></div>
            </div>
          </section>
          <section class="panel selview">
            <div class="tabs"><button class="tab lit">Selection/View<svg class="burger"><use href="#i-menu" /></svg></button></div>
            <table>
              <thead><tr><td></td><th>Start</th><th>End</th><th>Duration</th></tr></thead>
              <tbody>
                <tr><th>Selection</th><td><a href="#s1">0:00.000</a></td><td><a href="#s2">0:00.000</a></td><td><a href="#s3">0:00.000</a></td></tr>
                <tr><th>View</th><td><a href="#v1">0:00.000</a></td><td><a href="#v2">13:57.697</a></td><td><a href="#v3">13:57.697</a></td></tr>
              </tbody>
            </table>
          </section>
        </div>
      </div>
    </main>

    <footer class="status">
      <span class="msg">Multitrack Session Backup save completed in 0.01 seconds</span>
      <span class="s1"></span><span class="s2"></span>
      <span class="s3">44100 Hz <b>●</b> 32-bit Mixing</span><span class="s4">70.46 MB</span><span class="s5">13:57.697</span><span class="s6">1.47 TB free</span><span class="s7"></span>
    </footer>
  </div>
</template>

<style>
body { background: #161616; }
</style>

<style scoped>
* { box-sizing: border-box; }
.app { display: flex; flex-direction: column; min-height: 100vh; background: #161616; color: #9a9a9a; font: 14px/20px "Noto Sans CJK SC", "Noto Sans", sans-serif; overflow: hidden; }
button { background: none; border: 0; padding: 0; margin: 0; color: inherit; font: inherit; display: flex; align-items: center; justify-content: center; white-space: nowrap; }
input { font: 16px/20px "Liberation Sans", Arial, sans-serif; color: #d0d0d0; background: none; border: 0; padding: 0; min-width: 0; outline: 0; }
a { color: #2d8ceb; text-decoration: none; }
i, em { font-style: normal; }
svg { display: block; flex: none; width: 20px; height: 20px; }
.sprite { position: absolute; width: 0; height: 0; }
.ln, .ln2, .ln3 { fill: none; stroke: currentColor; stroke-width: 1; }
.ln2 { stroke-width: 1.4; }
.ln3 { stroke-width: 2; }
.w14 { width: 14px; } .w16 { width: 16px; } .w18 { width: 18px; } .w20 { width: 20px; } .w22 { width: 22px; } .w24 { width: 24px; height: 24px; } .w28 { width: 28px; }
.dim { color: #484848; }
.half { color: #6a6a6a; }
.burger { width: 12px; height: 12px; color: #8a8a8a; }

.titlebar { display: flex; align-items: center; height: 30px; background: linear-gradient(90deg, #f7eef7, #f9eef1); color: #1a1a1a; padding-left: 3px; }
.titlebar h1 { flex: 1; margin: 0 0 0 9px; font: 400 16px/24px "Noto Sans", sans-serif; }
.logo { width: 18px; height: 18px; border-radius: 4px; background: #00005b; color: #9a99ff; font: 700 11px/18px "Noto Sans", sans-serif; text-align: center; }
.winbtns { display: flex; padding-right: 2px; }
.winbtns button { width: 61px; }
.winbtns svg { width: 15px; height: 15px; }
.menubar { display: flex; gap: 19px; height: 26px; background: #fff; color: #111; padding-left: 9px; font: 15px/26px "Noto Sans", sans-serif; }

.toolbar { display: flex; align-items: stretch; height: 34px; background: #232323; border-top: 1px solid #444; margin-bottom: 2px; }
.modes { display: flex; margin: 2px 29px 2px 9px; border: 2px solid #303030; border-radius: 4px; }
.mode { width: 121px; gap: 11px; padding: 0 0 2px 2px; }
.mode.active { background: #151515; color: #2d8ceb; border-left: 1px solid #303030; }
.tools { display: flex; align-items: center; flex: 1; border-left: 2px solid #2f2f2f; padding: 0 0 2px 25px; color: #9a9a9a; }
.tool { width: 36px; height: 30px; }
.tool.dim { color: #404040; }
.tool.active { background: #151515; border: 2px solid #303030; border-radius: 4px; color: #2d8ceb; width: 32px; margin: 0 4px 0 8px; }
.rule { width: 1px; height: 28px; background: #303030; margin-left: 6px; }
.spaces { display: flex; align-items: center; border-left: 1px solid #151515; padding: 0 13px 2px 29px; gap: 59px; }
.spaces .active { color: #2d8ceb; }
.spaces .burger { color: #2d8ceb; margin-left: 16px; }
.spaces .more { margin-left: -37px; }
.spaces .more svg { width: 14px; height: 12px; }
.help { border-left: 2px solid #303030; padding: 3px 6px 4px 4px; display: flex; }
.field { display: flex; align-items: center; height: 26px; width: 260px; background: #151515; border: 2px solid #303030; border-radius: 4px; padding: 0 6px; gap: 12px; }
.field svg { height: 18px; }
.field input { flex: 1; }

.workspace { flex: 1; display: grid; grid-template-columns: minmax(0, 651fr) minmax(0, 1262fr); column-gap: 5px; padding: 0 1px; }
.col { display: flex; flex-direction: column; gap: 6px; }
.right { gap: 5px; }
.panel { background: #232323; min-width: 0; }
.tabs { display: flex; align-items: flex-start; gap: 29px; padding: 7px 16px 0 15px; height: 32px; }
.tab { gap: 13px; height: 28px; padding: 0 0 3px 1px; border-bottom: 3px solid transparent; }
.tab.on { color: #d8d8d8; border-color: #cfcfcf; }
.tab.lit { color: #c8c8c8; }

.files { height: 346px; }
.filetools { display: flex; align-items: center; height: 40px; margin-top: 4px; padding: 0 5px 0 13px; }
.filetools button { margin-right: 14px; }
.filetools button.dim { color: #444; }
.filetools button:nth-child(3) { margin-right: 52px; }
.filetools button:nth-child(4) { margin-right: 16px; }
.filter { margin-left: auto; width: 264px; gap: 0; padding-left: 8px; }
.caret { border: 4px solid transparent; border-top: 5px solid #9a9a9a; margin: 6px 0 0 -3px; }
.filetable { position: relative; height: 232px; margin: -2px 5px 0 7px; overflow: hidden; }
.filetable::before { content: ''; position: absolute; inset: 28px 0 0; border: 2px solid #2e2e2e; border-radius: 4px; background: #1d1d1d; }
.filetable table { position: relative; width: 100%; table-layout: fixed; border-collapse: collapse; }
.c1 { width: 241px; } .c2 { width: 55px; } .c3 { width: 134px; } .c4 { width: 102px; } .c5 { width: 80px; }
.filetable th { text-align: left; font-weight: 400; height: 30px; padding: 0 0 5px 6px; border-left: 1px solid #303030; white-space: nowrap; overflow: hidden; }
.filetable th:first-child { border: 0; }
.sort { display: inline-block; width: 11px; height: 12px; margin-left: 3px; }
.filetable td { height: 25px; padding: 0 0 0 8px; white-space: nowrap; border-bottom: 2px solid #292929; }
.filetable td.dur { padding-left: 21px; }
.filetable td:last-child { border: 0; }
.fname { display: flex; align-items: center; height: 23px; }
.exp { width: 32px; flex: none; color: #ddd; }
.exp svg { width: 8px; height: 12px; }
.kind { height: 16px; margin-right: 9px; }
.blue { color: #2d8ceb; }
.blue .kind { color: #8a8a8a; }
.vthumb { position: absolute; right: 3px; top: 29px; width: 13px; height: 106px; border-radius: 7px; background: #353535; }
.hbar { position: absolute; left: 1px; right: 1px; bottom: 1px; height: 15px; background: #1d1d1d; }
.hbar i { display: block; width: 218px; height: 13px; border-radius: 7px; background: #353535; }
.preview { display: flex; gap: 22px; height: 38px; align-items: center; padding-left: 275px; }
.preview button:nth-child(2) { margin-right: -6px; }

.props { flex: 1; }
.props .tabs, .history .tabs { height: 38px; }
.cliprow { display: flex; align-items: center; gap: 8px; height: 38px; padding: 0 8px; border-bottom: 2px solid #2c2c2c; }
.cliprow svg { height: 16px; }
.box { flex: 1; height: 26px; background: #151515; border: 2px solid #303030; border-radius: 4px; padding: 0 4px; margin-bottom: 2px; }
.sect { width: 100%; height: 35px; justify-content: flex-start; padding: 0 17px 3px 6px; color: #b8b8b8; border-bottom: 2px solid #2c2c2c; }
.sect svg { width: 8px; height: 12px; margin-right: 19px; }
.sect svg.d { width: 12px; height: 8px; margin-right: 15px; }
.sect em { margin-left: auto; color: #8f8f8f; }
.sect.open { border: 0; padding-bottom: 5px; }
.basic { height: 166px; border-bottom: 2px solid #2c2c2c; }
.gain { display: flex; align-items: center; height: 28px; }
.lab { width: 86px; text-align: right; }
.vb { width: 22px; height: 20px; color: #8a8a8a; margin: 0 6px 0 5px; }
.kn { width: 24px; height: 24px; color: #a0a0a0; margin-right: 7px; }
.unit { margin-left: 4px; }
.swatch { width: 17px; height: 17px; margin-left: 10px; background: #fff; border: 1px solid #000; }
.swatch svg { width: 14px; height: 14px; }
.check { display: flex; align-items: center; gap: 4px; height: 29px; padding: 2px 0 0 20px; }
.check input { appearance: none; width: 19px; height: 19px; border: 2px solid #8c8c8c; border-radius: 3px; margin: 0; }
.history { height: 127px; }
.histlist { height: 45px; margin: 5px 6px 0; border: 2px solid #303030; border-radius: 3px; background: #1d1d1d; }
.histrow { display: flex; align-items: center; height: 25px; background: #454545; }
.histrow svg { margin: 0 8px 0 12px; }
.mark { width: 12px; height: 13px; margin-left: 3px; background: #a0a0a0; clip-path: polygon(0 0, 60% 0, 100% 50%, 60% 100%, 0 100%); }
.undo { display: flex; align-items: center; justify-content: space-between; height: 39px; padding: 0 14px 0 6px; }

.editor { flex: 1; display: flex; flex-direction: column; border: 2px solid #1f5c9e; }
.editor .tabs { padding: 5px 16px 0 12px; height: 45px; }
.overview { display: flex; align-items: center; height: 40px; padding-left: 6px; }
.navwrap { position: relative; flex: 1; }
.nav { height: 40px; border: 3px solid #666; border-radius: 5px; background: #2d2d2d; padding: 3px 1px 0 4px; }
.nav svg { width: 100%; height: 27px; }
.grip { position: absolute; top: 4px; width: 8px; height: 32px; border: 2px solid #707070; border-radius: 4px; background: #2a2a2a; }
.grip.l { left: -2px; } .grip.r { right: -2px; }
.overview button { width: 59px; }

.session { flex: 1; display: grid; grid-template-columns: 299px minmax(0, 1fr) 35px; grid-template-rows: 36px minmax(0, 1fr); margin-top: 22px; padding-left: 6px; }
.headtools { display: flex; justify-content: space-between; padding: 0 11px 7px 0; color: #9a9a9a; }
.views { display: flex; border: 2px solid #303030; border-radius: 4px; height: 29px; }
.views button { width: 28px; border-left: 2px solid #2d2d2d; }
.views button:first-child { border: 0; }
.views .active, .snap .active { background: #151515; color: #2d8ceb; }
.views .fx { font: italic 20px/20px "Noto Sans", sans-serif; padding-bottom: 3px; }
.snap { display: flex; padding-top: 2px; }
.snap button { width: 28px; height: 29px; border-radius: 4px; }
.snap svg { height: 18px; }
.ruler { position: relative; grid-column: 2; border: 2px solid #0c0c0c; border-width: 2px 0 0 2px; margin-left: -2px; }
.hms { position: absolute; left: 4px; top: 1px; }
.scale { position: absolute; inset: 0; overflow: hidden; }
.tick { position: absolute; top: 1px; bottom: 0; width: 60px; margin-left: -30px; text-align: center; }
.tick::after { content: ''; position: absolute; left: 30px; bottom: 1px; width: 1px; height: 10px; background: #9a9a9a; }
.tick.minor::after { height: 7px; }
.playhead { position: absolute; left: -8px; top: 15px; width: 16px; height: 18px; z-index: 3; }

.heads, .lanes, .vnav { grid-row: 2; display: grid; grid-template-rows: repeat(7, minmax(82px, 1fr)) 78px; }
.heads, .lanes { border-bottom: 1px solid #303030; }
.heads { grid-column: 1; }
.head { display: flex; border-bottom: 4px solid #303030; border-left: 1px solid #303030; min-height: 0; }
.head.sel { background: #303030; }
.strip { width: 17px; border-radius: 5px 0 0 5px; background: var(--strip); }
.t1 { --strip: #35a983; --bg: #1d3029; --wave: #36a983; --mini: #5dba97; }
.t2 { --strip: #34224a; --bg: #34224a; --wave: #a671e8; --mini: #5a4a68; }
.t3 { --strip: #463e15; --bg: #463e15; --wave: #dbb900; --mini: #6b6339; }
.t4 { --strip: #19302f; --bg: #19302f; --wave: #26b2b8; --mini: #425653; }
.t5 { --strip: #3a1c3f; --bg: #3a1c3f; --wave: #dc55e8; --mini: #5f4460; }
.t7 { --strip: #16283f; --bg: #16283f; --wave: #4a9ef2; --mini: #3f4e60; }
.t6 { --strip: #2d391d; --bg: #2d391d; --wave: #87d63c; --mini: #505c42; }
.mix { --strip: #16283f; border-bottom: 0; }
.mx { --mini: #3f4e60; }
.hbody { flex: 1; padding: 5px 9px 0 4px; }
.hrow { display: flex; align-items: center; height: 30px; }
.hrow > svg.w20 { height: 16px; margin: 0 6px; color: #8a8a8a; }
.hrow > span { flex: 1; }
.hrow .vb { margin: 0 7px 0 0; height: 21px; }
.two { margin-top: 2px; height: 28px; }
.msr { display: flex; gap: 5px; }
.msr button { width: 24px; height: 26px; border: 2px solid #2f2f2f; border-radius: 4px; background: #1b1b1b; font: 13px/20px "Noto Sans", sans-serif; }
.msr button:disabled { color: #444; }

.lanes { position: relative; grid-column: 2; background: #1d1d1d; }
.lane { position: relative; border-bottom: 4px solid #303030; overflow: hidden; min-height: 0; }
.lane.sel { background: #505050; }
.mixlane { border: 0; }
.clip { position: absolute; top: 0; bottom: 0; background: var(--bg); border-left: 2px solid #b8b8b8; border-right: 1px solid #0f0f0f; color: #c4c4c4; overflow: hidden; }
.clip.first { border-left-color: var(--bg); }
.clip.on { --bg: #11553d; --wave: #45d8a5; border: 3px solid #fff; border-top-width: 2px; border-radius: 4px; color: #fff; font-weight: 500; z-index: 1; }
.wv { position: absolute; left: 0; top: 0; width: 100%; height: 82px; fill: var(--wave); }
.vline { position: absolute; left: 0; right: 0; top: 43px; height: 2px; background: #a9a27a; }
.chline { position: absolute; left: 0; right: 0; top: 49px; height: 1px; background: #8a8a8a80; }
.t1 .wv { top: -1px; }
.t1 .vline { top: 42px; }
.clip.on .wv { top: -3px; }
.clip.on .vline { top: 40px; background: #f2f0a0; }
.clip.on .chline { top: 47px; }
.ctitle { position: relative; display: flex; align-items: center; height: 19px; padding: 0 9px 0 1px; gap: 9px; font-size: 12px; white-space: nowrap; }
.on .ctitle { height: 14px; padding: 0 7px 0 1px; }
.ctitle span:first-child { flex: 1; }
.ctitle svg { width: 12px; height: 8px; }
.bars { position: absolute; left: 11px; top: 60px; width: 13px; height: 12px; color: #e8e8e8; }
.t6 .bars { left: 16px; top: 58px; }
.round { position: absolute; top: 53px; width: 24px; height: 24px; margin-left: -12px; border: 2px solid #a0a0a0; border-radius: 50%; background: #101010cc; color: #ccc; display: flex; align-items: center; justify-content: center; }
.round svg { width: 12px; height: 11px; }
.fade { position: absolute; top: 19px; width: 16px; height: 16px; opacity: .9; }
.fade.in { left: 15px; } .fade.out { right: 12px; }
.fades { position: absolute; left: 0; top: 0; width: 100%; height: 82px; }
.zig { fill: none; stroke: #e0e0e0; stroke-width: 1.2; }
.needle { position: absolute; left: -1px; top: 0; bottom: 0; width: 2px; background: #b01212; z-index: 4; }
.vnav { position: relative; grid-column: 3; width: 23px; margin-left: 2px; border: 2px solid #686868; border-radius: 5px; background: #2a2a2a; }
.vnav i { background: var(--mini); margin-bottom: 4px; }
.cap { position: absolute; left: 2px; width: 15px; height: 9px; border: 2px solid #777; border-radius: 4px; background: #333; }
.cap.top { top: -2px; } .cap.bot { bottom: -2px; }
.transport { display: flex; align-items: center; justify-content: space-between; height: 48px; padding: 0 22px 0 12px; }
.time { font-size: 22px; line-height: 30px; width: 86px; padding-top: 4px; }
.tbtns { display: flex; }
.tbtns:nth-child(2) { margin-right: auto; margin-left: 230px; }
.tbtns button { width: 39px; height: 40px; }
.tbtns svg.w24 { width: 24px; height: 24px; }

.bottom { display: grid; grid-template-columns: minmax(0, 884fr) minmax(0, 372fr); column-gap: 6px; height: 131px; }
.levels .tabs { height: 43px; }
.selview .tabs { height: 40px; }
.meter { display: flex; justify-content: space-between; height: 62px; margin: 0 7px 0 7px; border: 2px solid #000; background: #1d1d1d; }
.peak { width: 2px; background: #d8cf00; }
.clipzone { width: 13px; border-left: 2px solid #000; }
.dbscale { padding: 0 0 0 9px; margin-right: 22px; }
.dbticks { display: flex; justify-content: space-between; height: 8px; }
.dbticks i { width: 1px; height: 4px; background: #7a7a7a; }
.dbticks .big { height: 7px; background: #a8a8a8; }
.dblabels { display: flex; justify-content: space-between; margin: -4px -14px 0; font-size: 11px; line-height: 20px; }
.dblabels span { width: 28px; text-align: center; }
.dblabels span:first-child { text-align: right; }
.selview table { width: 100%; table-layout: fixed; border-collapse: collapse; }
.selview th, .selview td { text-align: left; font-weight: 400; padding: 0; height: 28px; line-height: 20px; }
.selview thead td, .selview tbody th { width: 83px; padding-left: 14px; }
.selview thead th, .selview thead td { height: 22px; }
.selview thead th { width: 96px; }
.selview td:last-child, .selview thead th:last-child { width: 98px; }
.selview tbody td { padding-left: 1px; }

.status { display: flex; align-items: center; height: 27px; margin: 2px 1px 0; background: #232323; }
.status span { height: 20px; border-left: 1px solid #333; white-space: nowrap; line-height: 18px; }
.status b { font: 11px/18px "DejaVu Sans", sans-serif; vertical-align: top; padding: 0 1px; }
.status .msg { flex: 1; border: 0; padding-left: 10px; }
.s1 { width: 67px; } .s2 { width: 139px; }
.s3 { width: 186px; padding-left: 11px; }
.s4 { width: 81px; padding-left: 11px; }
.s5 { width: 96px; padding-left: 23px; }
.s6 { width: 116px; padding-left: 11px; }
.s7 { width: 64px; }
</style>
